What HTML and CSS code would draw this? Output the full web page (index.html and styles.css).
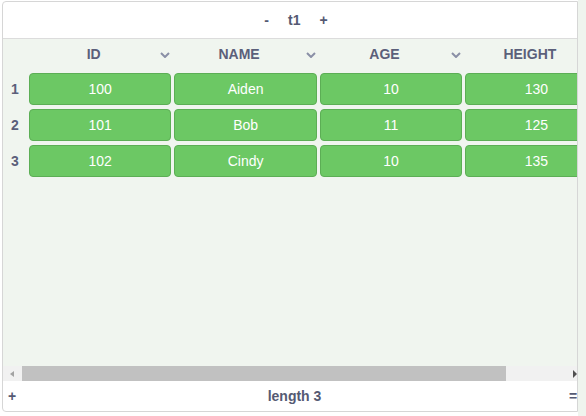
FILE: index.html
```html
<!DOCTYPE html>
<html>
<head>
<meta charset="utf-8">
<link rel="stylesheet" href="styles.css">
</head>
<body>
<div class="page">
  <div class="panel">
    <div class="toolbar">
      <span class="tb-btn">-</span>
      <span class="tb-title">t1</span>
      <span class="tb-btn">+</span>
    </div>
    <div class="body">
      <div class="grid">
        <div class="hcell idx"></div>
        <div class="hcell"><span class="htext">ID</span><svg class="chev" width="10" height="6" viewBox="0 0 10 6"><path d="M1 1 L5 5 L9 1" fill="none" stroke="#8a8fa6" stroke-width="2"/></svg></div>
        <div class="hcell"><span class="htext">NAME</span><svg class="chev" width="10" height="6" viewBox="0 0 10 6"><path d="M1 1 L5 5 L9 1" fill="none" stroke="#8a8fa6" stroke-width="2"/></svg></div>
        <div class="hcell"><span class="htext">AGE</span><svg class="chev" width="10" height="6" viewBox="0 0 10 6"><path d="M1 1 L5 5 L9 1" fill="none" stroke="#8a8fa6" stroke-width="2"/></svg></div>
        <div class="hcell"><span class="htext">HEIGHT</span><svg class="chev" width="10" height="6" viewBox="0 0 10 6"><path d="M1 1 L5 5 L9 1" fill="none" stroke="#8a8fa6" stroke-width="2"/></svg></div>

        <div class="idx">1</div>
        <div class="cell">100</div>
        <div class="cell">Aiden</div>
        <div class="cell">10</div>
        <div class="cell">130</div>

        <div class="idx">2</div>
        <div class="cell">101</div>
        <div class="cell">Bob</div>
        <div class="cell">11</div>
        <div class="cell">125</div>

        <div class="idx">3</div>
        <div class="cell">102</div>
        <div class="cell">Cindy</div>
        <div class="cell">10</div>
        <div class="cell">135</div>
      </div>
    </div>
    <div class="hscroll">
      <div class="sb-btn"><span class="arrow-left"></span></div>
      <div class="sb-thumb"></div>
      <div class="sb-rest"></div>
      <div class="sb-btn right"><span class="arrow-right"></span></div>
    </div>
    <div class="footer">
      <span class="f-btn">+</span>
      <span class="f-title">length 3</span>
      <span class="f-btn eq">=</span>
    </div>
  </div>
  <div class="strip"></div>
</div>
</body>
</html>
```

FILE: styles.css
```css
html, body {
  margin: 0;
  padding: 0;
  background: #ffffff;
  font-family: "Liberation Sans", Arial, sans-serif;
  font-size: 14px;
}

.page {
  display: flex;
  width: 586px;
  height: 416px;
}

.panel {
  box-sizing: border-box;
  width: 576px;
  height: 411px;
  margin: 1px 0 0 2px;
  border: 1px solid #d6d6d6;
  border-radius: 4px 0 0 4px;
  display: flex;
  flex-direction: column;
  overflow: hidden;
  background: #ffffff;
}

.strip {
  flex: 1;
  background: #eff4ee;
}

.toolbar {
  height: 36px;
  flex: none;
  border-bottom: 1px solid #dcdcdc;
  display: flex;
  align-items: center;
  justify-content: center;
  gap: 15px;
  color: #555a73;
  font-weight: bold;
  padding-left: 12px;
}

.tb-title {
  padding: 0 4px;
}

.body {
  flex: 1;
  background: #f0f5ef;
  overflow: hidden;
}

.grid {
  display: grid;
  grid-template-columns: 23px repeat(4, 142.4px);
  grid-template-rows: 30px repeat(3, 32px);
  column-gap: 3px;
  row-gap: 4px;
  width: max-content;
}

.hcell {
  display: flex;
  align-items: center;
  color: #5b5f7a;
  font-weight: bold;
}

.htext {
  flex: 1;
  text-align: center;
  padding-right: 2px;
}

.chev {
  margin-right: 1px;
  margin-top: 1px;
}

.idx {
  display: flex;
  align-items: center;
  justify-content: center;
  color: #5b5f7a;
  font-weight: bold;
  padding-left: 1px;
}

.cell {
  box-sizing: border-box;
  background: #6cc864;
  border: 1px solid #5cae55;
  border-radius: 4px;
  color: #ffffff;
  display: flex;
  align-items: center;
  justify-content: center;
}

.hscroll {
  flex: none;
  height: 15px;
  background: #f1f1f1;
  display: flex;
  align-items: stretch;
}

.sb-btn {
  width: 17px;
  display: flex;
  align-items: center;
  justify-content: center;
}

.sb-btn.right {
  width: 9px;
  justify-content: flex-end;
}

.arrow-left {
  width: 0;
  height: 0;
  border-top: 3.5px solid transparent;
  border-bottom: 3.5px solid transparent;
  border-right: 4px solid #a3a3a3;
  margin-left: 1px;
}

.arrow-right {
  width: 0;
  height: 0;
  border-top: 4px solid transparent;
  border-bottom: 4px solid transparent;
  border-left: 4px solid #505050;
}

.sb-thumb {
  width: 484px;
  margin-left: 2px;
  background: #c1c1c1;
}

.sb-rest {
  flex: 1;
}

.footer {
  flex: none;
  height: 30px;
  display: flex;
  align-items: center;
  color: #555a73;
  font-weight: bold;
}

.f-btn {
  width: 16px;
  text-align: center;
  padding-left: 1px;
}

.f-btn.eq {
  width: 8px;
  text-align: right;
  padding: 0;
  overflow: hidden;
}

.f-title {
  flex: 1;
  text-align: center;
}
```
